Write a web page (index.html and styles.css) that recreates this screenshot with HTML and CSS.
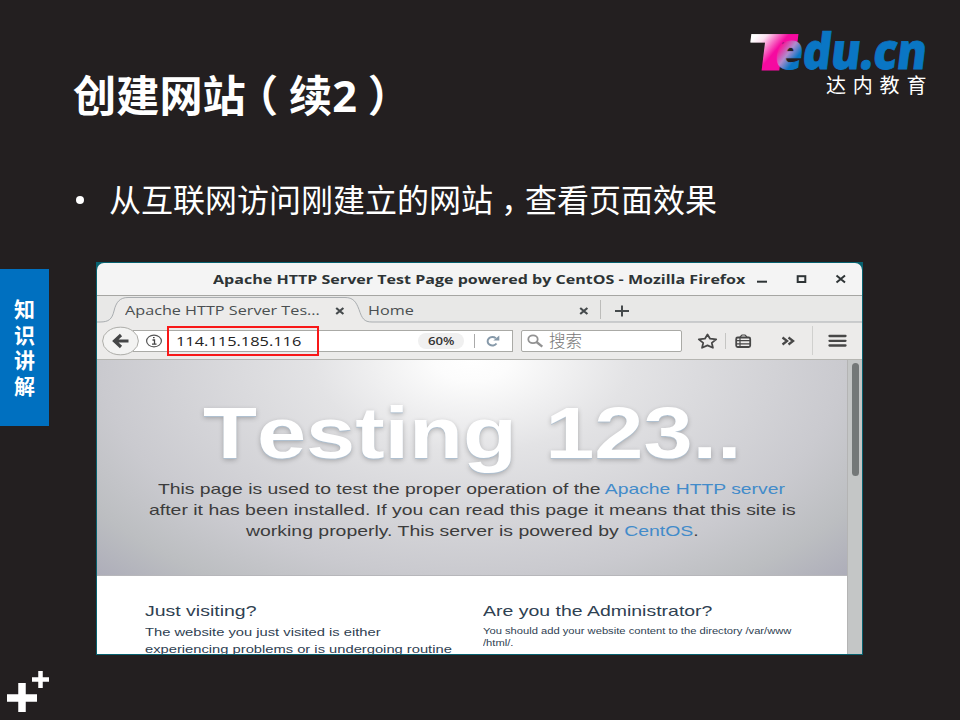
FILE: index.html
```html
<!DOCTYPE html>
<html lang="zh-CN">
<head>
<meta charset="utf-8">
<title>创建网站（续2）</title>
<link rel="stylesheet" href="styles.css">
</head>
<body>
<main class="slide">
  <header class="head">
    <h1 class="title">创建网站<span class="paren-open">（</span>续<span class="latin">2</span><span class="paren-close">）</span></h1>
    <div class="brand">
      <svg class="brand-mark" width="200" height="50" viewBox="-12 -4 200 50">
        <defs>
          <linearGradient id="pink" gradientUnits="userSpaceOnUse" x1="6" y1="-34" x2="30" y2="-17">
            <stop offset="0" stop-color="#fff"/><stop offset=".3" stop-color="#fbe0f0"/><stop offset=".9" stop-color="#f50aa0"/><stop offset="1" stop-color="#f50aa0"/>
          </linearGradient>
          <linearGradient id="blend" gradientUnits="userSpaceOnUse" x1="1" y1="-17" x2="20" y2="-5">
            <stop offset="0" stop-color="#f31f9b"/><stop offset=".45" stop-color="#b08ccd"/><stop offset=".9" stop-color="#0a76c4"/><stop offset="1" stop-color="#0a76c4"/>
          </linearGradient>
        </defs>
        <g transform="translate(-2.500 39.500) skewX(-7)"><text class="brand-text" textLength="50" lengthAdjust="spacingAndGlyphs" fill="url(#pink)" stroke="url(#pink)">T</text></g>
        <g transform="translate(26 39) skewX(-7)"><text class="brand-text" textLength="151" lengthAdjust="spacingAndGlyphs" fill="url(#blend)" stroke="url(#blend)">edu.cn</text></g>
      </svg>
      <div class="brand-name">达内教育</div>
    </div>
  </header>

  <ul class="points">
    <li><span class="dot"></span><span>从互联网访问刚建立的网站<span class="comma">，</span>查看页面效果</span></li>
  </ul>

  <section class="stage">
    <aside class="label">知<br>识<br>讲<br>解</aside>
    <div class="window">
      <div class="chrome">
        <div class="titlebar">
          <div class="window-title"><span class="fit">Apache HTTP Server Test Page powered by CentOS - Mozilla Firefox</span></div>
          <svg class="controls" width="94" height="16" viewBox="0 0 94 16" fill="none" stroke="#2e3436">
            <path d="M3 10.700h10" stroke-width="2"/><rect x="43.700" y="5.200" width="7.600" height="5.800" stroke-width="2"/><path d="M82.500 4.500l8.500 7M91 4.500l-8.500 7" stroke-width="2"/>
          </svg>
        </div>
        <div class="tabs">
          <svg class="tab-shape" width="765" height="27" viewBox="0 0 765 27" fill="none">
            <path d="M0 26h3c9 0 12-3 14-11 2-9 6-13.500 14-13.500h217c8 0 11 4 14 12 3 9 5 12.500 13 12.500h490V27H0z" fill="#ecebea"/>
            <path d="M0 26h3c9 0 12-3 14-11 2-9 6-13.500 14-13.500h217c8 0 11 4 14 12 3 9 5 12.500 13 12.500h490" stroke="#a9adb0"/>
          </svg>
          <div class="tab tab-active"><span class="fit">Apache HTTP Server Tes...</span></div>
          <svg class="close" width="10" height="10" viewBox="0 0 10 10"><path d="M1.200 2l7.200 6M8.400 2l-7.200 6" stroke="#454a4c" stroke-width="2.200"/></svg>
          <div class="tab tab-home"><span class="fit">Home</span></div>
          <svg class="close" width="10" height="10" viewBox="0 0 10 10"><path d="M1.200 2l7.200 6M8.400 2l-7.200 6" stroke="#454a4c" stroke-width="2.200"/></svg>
          <i class="tab-divider"></i>
          <svg class="plus" width="16" height="14" viewBox="0 0 16 14"><path d="M1 7h14M8 1.500v11" stroke="#454a4c" stroke-width="2"/></svg>
        </div>
        <div class="toolbar">
          <svg class="back" width="38" height="30" viewBox="0 0 38 30">
            <ellipse cx="18.500" cy="15" rx="17.900" ry="13.800" fill="#f3f3f2" stroke="#adada9"/>
            <path d="M19 9l-6.500 6 6.500 6M13.500 15H26.500" fill="none" stroke="#454647" stroke-width="3.200"/>
          </svg>
          <div class="address">
            <svg class="info" width="18" height="14" viewBox="0 0 18 14"><ellipse cx="9" cy="7" rx="7.400" ry="5.800" fill="none" stroke="#555" stroke-width="1.200"/><path d="M7.500 6h2v4M7 10.200h4.500M8 3.700h1.600" fill="none" stroke="#444" stroke-width="1.300"/></svg>
            <div class="url"><span class="fit">114.115.185.116</span></div>
            <div class="percent"><span class="fit">60%</span></div>
            <i class="address-divider"></i>
            <svg class="reload" width="14" height="12" viewBox="0 0 14 12"><path d="M10.500 8.500A4.800 4.200 0 1 1 9.800 3.300" fill="none" stroke="#8699a9" stroke-width="2"/><path d="M7.300 5.500h6V.5z" fill="#8699a9"/></svg>
          </div>
          <div class="search">
            <svg width="17" height="14" viewBox="0 0 17 14" fill="none" stroke="#929292"><ellipse cx="6" cy="5.200" rx="4.700" ry="3.900" stroke-width="1.800"/><path d="M9.500 8l5.800 4.600" stroke-width="2.400"/></svg>
            <span>搜索</span>
          </div>
          <svg class="tools" width="166" height="38" viewBox="0 0 166 38" fill="none" stroke="#474747">
            <path d="M18.500 12.500l2.600 4.200 6.100.7-4.400 3.500 1.100 4.900-5.400-2.400-5.400 2.400 1.100-4.900-4.400-3.500 6.100-.7z" stroke-width="1.800" stroke-linejoin="round"/>
            <path d="M36.500 11v16" stroke="#c5c5c3"/>
            <rect x="47.200" y="15.500" width="14" height="9.500" rx="1.500" stroke-width="1.800"/><path d="M51 15l2-2h3l2 2M47 18.600h14M47 21.800h14M51 16v9" stroke-width="1.200"/>
            <path d="M93.500 15.500l4.600 3.500-4.600 3.500M99.500 15.500l4.600 3.500-4.600 3.500" stroke-width="2.200"/>
            <path d="M123.500 4v29" stroke="#d0d0ce"/>
            <path d="M140.500 14h16M140.500 18.800h16M140.500 23.500h16" stroke-width="2.300" stroke-linecap="round"/>
          </svg>
        </div>
      </div>
      <div class="viewport">
        <div class="page">
          <div class="hero">
            <h2 class="testing"><span class="fit">Testing 123..</span></h2>
            <div class="lead lead-1"><span class="fit">This page is used to test the proper operation of the <a>Apache HTTP server</a></span></div>
            <div class="lead lead-2"><span class="fit">after it has been installed. If you can read this page it means that this site is</span></div>
            <div class="lead lead-3"><span class="fit">working properly. This server is powered by <a>CentOS</a>.</span></div>
          </div>
          <div class="columns">
            <div class="visit">
              <h3><span class="fit">Just visiting?</span></h3>
              <p><span class="fit">The website you just visited is either<br>experiencing problems or is undergoing routine</span></p>
            </div>
            <div class="admin">
              <h3><span class="fit">Are you the Administrator?</span></h3>
              <p><span class="fit">You should add your website content to the directory /var/www<br>/html/.</span></p>
            </div>
          </div>
        </div>
        <div class="scroll"><div class="thumb"></div></div>
      </div>
    </div>
  </section>
  <svg class="pluses" width="50" height="45" viewBox="0 0 50 45" stroke="#fff" fill="none"><path d="M7 31h30M22 16v30" stroke-width="7.500"/><path d="M32 12.500h17M40.500 4v17" stroke-width="4.500"/></svg>
</main>
</body>
</html>
```

FILE: styles.css
```css
* { box-sizing: border-box; }
body { margin: 0; }
h1, h2, h3, p, ul { margin: 0; padding: 0; font-weight: normal; }
svg { display: block; flex: none; }

.slide {
  width: 960px; height: 720px; overflow: hidden;
  display: flex; flex-direction: column;
  background: #231f20; color: #fff;
  font-family: "Noto Sans CJK SC", sans-serif;
}
.fit { display: inline-block; white-space: nowrap; transform-origin: 0 50%; }

.head { height: 170px; display: flex; justify-content: space-between; padding: 26px 24px 0 73px; }
.title { margin-top: 37px; font-size: 43.200px; line-height: 60px; font-weight: 700; white-space: nowrap; }
.latin { font-family: "Open Sans", sans-serif; }
.paren-open, .paren-close, .comma { display: inline-block; width: 1em; }
.paren-open { text-indent: -.25em; }
.paren-close { text-indent: .25em; }
.comma { text-indent: .25em; }
.brand { width: 200px; }
.brand-text { font: 800 50px "Open Sans", sans-serif; stroke-width: .8px; }
.brand-name { margin-top: -3px; font-size: 20px; line-height: 24px; letter-spacing: 6.800px; padding-left: 90px; white-space: nowrap; }

.points { height: 92px; list-style: none; padding: 5px 0 0 76px; }
.points li { display: flex; align-items: center; font-size: 32px; line-height: 46px; font-weight: 400; white-space: nowrap; }
.dot { width: 8px; height: 8px; border-radius: 50%; background: #fff; margin: 4px 25px 0 0; }

.stage { height: 405px; display: flex; align-items: flex-start; }
.label {
  width: 49px; height: 157px; margin: 7px 47px 0 0; padding-top: 27px;
  background: #0070c0; text-align: center; font-size: 21px; line-height: 25.500px; font-weight: 700;
}
.window {
  width: 767px; height: 393px; border: 1px solid #07616f; background: #07616f; overflow: hidden;
  display: flex; flex-direction: column;
}
.chrome { font-family: "Open Sans", sans-serif; color: #4a4f51; }
.titlebar {
  height: 33px; background: #f4f4f4; border-bottom: 1px solid #a6a6a3; border-radius: 7px 7px 0 0;
  display: flex; align-items: center; padding-left: 116px;
}
.window-title { width: 541px; font-size: 13px; line-height: 18px; font-weight: 700; color: #2e3436; }
.window-title .fit { transform: scaleX(1.235); }
.tabs { height: 27px; background: #e8e8e7; display: grid; grid-template-columns: 28px 210px 10px 23px 211px 10px 11px 14px 16px; align-items: center; }
.tab-shape { grid-area: 1 / 1 / 2 / 10; }
.tab { font-size: 13px; line-height: 18px; grid-row: 1; padding-top: 1px; }
.tab-active { grid-column: 2; }
.tab-home { grid-column: 5; }
.tab .fit { transform: scaleX(1.245); }
.close { grid-row: 1; grid-column: 3; margin-top: 3px; }
.tab-home + .close { grid-column: 6; }
.tab-divider { grid-row: 1; grid-column: 8; width: 1px; height: 19px; background: #bcbcba; }
.plus { grid-row: 1; grid-column: 9; margin-top: 2px; }
.toolbar { height: 37px; background: #ecebea; border-bottom: 1px solid #b5b5b1; display: flex; align-items: center; padding-left: 5px; }
.back { z-index: 1; }
.address {
  width: 380px; height: 22px; margin-left: -7px; padding-left: 11px;
  border: 1px solid #aaaaa6; background: #fff; display: flex; align-items: center;
}
.url {
  width: 152px; height: 30px; flex: none; margin: 0 99px 0 4px; padding-left: 7px;
  border: 2px solid #f81818; font-size: 13px; line-height: 26px; color: #222;
}
.url .fit { transform: scaleX(1.26); }
.percent { width: 46px; height: 16px; flex: none; border-radius: 8px; background: #f0f0f0; padding-left: 10px; font-size: 11px; line-height: 16px; font-weight: 600; color: #333; }
.percent .fit { transform: scaleX(1.2); }
.address-divider { width: 1px; height: 14px; background: #aaa; margin: 0 11px 0 10px; }
.search {
  width: 161px; height: 22px; margin-left: 8px; padding-left: 5px; border: 1px solid #aaaaa6; border-radius: 2px; background: #fff;
  display: flex; align-items: center; gap: 5px; color: #777; font: 300 16.500px/18px "Noto Sans CJK SC", sans-serif;
}
.search span { margin-top: -3px; }
.tools { margin-left: 7px; }

.viewport { flex: 1; min-height: 0; display: flex; overflow: hidden; background: #fff; }
.page { width: 750px; font-family: "Liberation Sans", sans-serif; }
.hero { height: 216px; padding-top: 33px; border-bottom: 1px solid #b7b7bb; background: radial-gradient(ellipse 530px 306px at 50% 0, #fff 0, #fcfcfc 7%, #e3e3e5 30%, #cacacf 70%, #bcbec1 86%, #adadb9 100%); }
.testing { height: 85px; margin-left: 106px; font-size: 71.500px; line-height: 80px; font-weight: 700; font-kerning: none; word-spacing: 3px; color: #fff; text-shadow: 0 1px 0 #afc0d0, 0 2px 5px rgba(0,0,0,.25); }
.testing .fit { transform: scaleX(1.235); }
.lead { height: 21px; font-size: 15px; line-height: 21px; color: #3c3c3c; }
.lead a { color: #428bca; }
.lead-1 { margin-left: 61px; }
.lead-2 { margin-left: 52px; }
.lead-3 { margin-left: 149px; }
.lead .fit { transform: scaleX(1.295); }
.lead-1 .fit { transform: scaleX(1.288); }
.columns { display: flex; padding: 25px 0 0 48px; color: #2f4152; }
.visit { width: 338px; }
.columns h3 { font-size: 15px; line-height: 20px; }
.columns h3 .fit { transform: scaleX(1.298); }
.visit p { margin-top: 3px; font-size: 11.500px; line-height: 16.500px; }
.admin p { margin-top: 4px; font-size: 9px; line-height: 12px; }
.visit p .fit { transform: scaleX(1.28); }
.admin p .fit { transform: scaleX(1.242); }
.scroll { width: 15px; background: #c4c6c6; padding: 3px 0 0 4px; border-left: 1px solid #b4b4b4; }
.thumb { width: 7px; height: 113px; border-radius: 4px; background: #747878; }
.pluses { margin-top: 0; }
```
